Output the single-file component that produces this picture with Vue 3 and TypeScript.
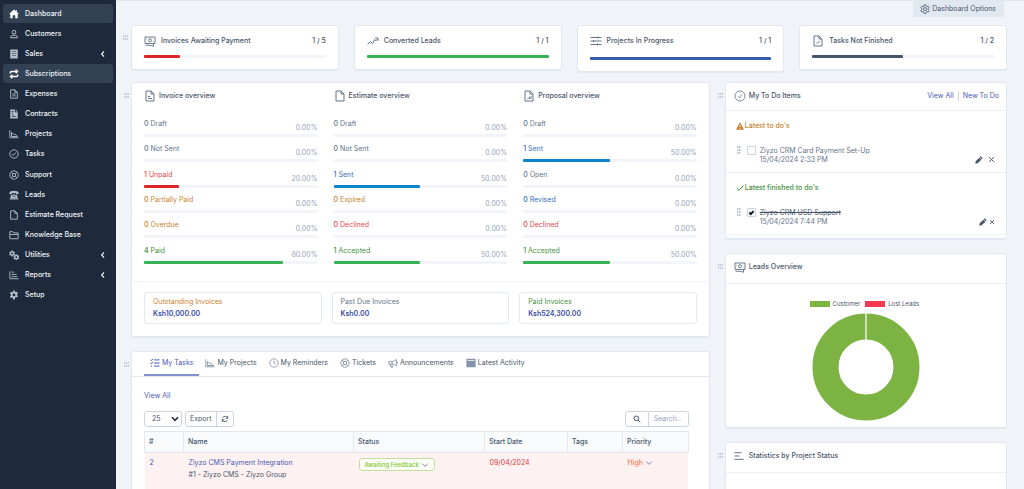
<script setup lang="ts">
import { h, ref, type FunctionalComponent } from 'vue'

interface Glyph {
  line?: string
  fill?: string
  weight?: number
}

const glyphs: Record<string, Glyph> = {
  home: { fill: 'M12 1 0 12h3v10h6v-7h6v7h6V12h3L19 7.400V3h-3v1.700Z' },
  user: { line: 'M12 3a4.500 4.500 0 1 0 0 9 4.500 4.500 0 0 0 0-9ZM4 21v-2c0-2.500 2-4 4.500-4h7c2.500 0 4.500 1.500 4.500 4v2Z', weight: 2.4 },
  receipt: { fill: 'M3 1h18v22H3ZM7 5.500v1.300h10V5.500ZM7 10v1.300h10V10ZM7 14.500v1.300h10v-1.300Z' },
  repeat: { line: 'M3 11V9c0-2 1-3 3-3h14M16 2l4.500 4L16 10M21 13v2c0 2-1 3-3 3H4M8 14l-4.500 4L8 22', weight: 3.4 },
  fileLines: { line: 'M4 2h10l6 6v14H4ZM14 2v6h6M8 12h8M8 16.500h8', weight: 2.2 },
  contract: { fill: 'M3 1h11v7h7v15H3ZM16 1l5 5h-5ZM6 5v1.500h5V5ZM6 9v1.500h4V9ZM7 18l2-5 2 4h5v1.500h-6l-1-2-1 2Z' },
  chart: { line: 'M2 3v18h21M6 8l5 5 3-1 6 6H6Z', weight: 2.2 },
  check: { line: 'M12 2a10 10 0 1 0 0 20 10 10 0 0 0 0-20ZM7.500 12.500l3 3 6-7', weight: 2.2 },
  checkThin: { line: 'M12 2a10 10 0 1 0 0 20 10 10 0 0 0 0-20ZM8 12.500l3 3 5-6.500', weight: 1.7 },
  ring: { line: 'M12 2a10 10 0 1 0 0 20 10 10 0 0 0 0-20ZM12 8a4 4 0 1 0 0 8 4 4 0 0 0 0-8ZM5 5l4 4M19 5l-4 4M5 19l4-4M19 19l-4-4', weight: 2.2 },
  phone: { fill: 'M1 7c0-3 6-5 11-5s11 2 11 5v3h-6V7H7v3H1ZM5 12h14l2 7H3ZM2 20h20v3H2ZM9 9h6v1.500H9ZM8 14v1.500h8V14Z' },
  file: { line: 'M4 2h10l6 6v14H4ZM14 2v6h6', weight: 2.2 },
  folder: { line: 'M2 4h7l3 3h10v14H2ZM2 11h20', weight: 2.2 },
  cog: { fill: 'M10 1h4l.6 3 2.200 1.200L19.700 4l2 3.500-2.300 2v2.900l2.300 2-2 3.600-2.900-1-2.200 1.200L14 23h-4l-.6-3.800L7.200 18l-2.900 1-2-3.600 2.300-2v-2.900l-2.300-2L4.300 4l2.900 1.200L9.400 4ZM12 8.300a3.400 3.400 0 1 0 0 6.800 3.400 3.400 0 0 0 0-6.800Z' },
  cogs: { fill: 'M6 1h3l.4 2 1.600 1 2-.6 1.400 2.500-1.400 1.500v1.800l1.400 1.400-1.400 2.500-2-.6-1.600.9L9 15.500H6l-.5-2.100-1.500-.9-2 .6-1.500-2.500L2 9.200V7.400L.5 5.900 2 3.400l2 .6 1.500-1ZM7.500 6a2.200 2.200 0 1 0 0 4.500 2.200 2.200 0 0 0 0-4.500ZM16 10h3l.4 2 1.600 1 2-.6 1.400 2.500-1.400 1.500v1.800l1.400 1.400-1.400 2.500-2-.6-1.600.9-.4 2h-3l-.5-2-1.500-.9-2 .6-1.500-2.500 1.500-1.400v-1.800L10.500 15l1.500-2.600 2 .6 1.500-1ZM17.500 15a2.200 2.200 0 1 0 0 4.500 2.200 2.200 0 0 0 0-4.500Z' },
  bars: { line: 'M2 3v18h21M6 5h6M6 10.500h12M6 16h14', weight: 2.2 },
  chevLeft: { line: 'M15 4 8 12l7 8', weight: 3.6 },
  chevDown: { line: 'M4 8l8 8 8-8', weight: 2.6 },
  chevBold: { line: 'M3 7l9 9 9-9', weight: 4.5 },
  money: { line: 'M2 4h20v13H2ZM12 7.500a3 3 0 1 0 0 6 3 3 0 0 0 0-6ZM5 7.500v1M19 12.500v1M3 20.500c7-.5 12 .5 16 2v-5', weight: 1.9 },
  trend: { line: 'M1 19l6-6 4 4 4-8 2 3 5-5M16 6h6v6', weight: 1.9 },
  sliders: { line: 'M1 5h22M1 12h22M1 19h22M16 3v4M7 10v4M15 17v4', weight: 2 },
  docCheck: { line: 'M4 2h10l6 6v14H4ZM14 2v6h6M9 15l2 2 4-5', weight: 2 },
  docText: { line: 'M4 2h10l6 6v14H4ZM14 2v6h6M8 13h4M8 17h8', weight: 2 },
  docPlain: { line: 'M4 2h10l6 6v14H4ZM14 2v6h6', weight: 2 },
  docChart: { line: 'M4 2h10l6 6v14H4ZM14 2v6h6M10 18v-2M13 18v-4M16 18v-6', weight: 2 },
  gearLine: { line: 'M10 2h4l.7 3 2.300 1.300 3-.9 2 3.400-2.200 2.200v2.500l2.200 2.200-2 3.400-3-.9-2.300 1.300L14 22.500h-4L9.300 19.500 7 18.200l-3 .9-2-3.400 2.200-2.200V11L2 8.800l2-3.400 3 .9L9.300 5ZM12 8.500a3.700 3.700 0 1 0 0 7.400 3.700 3.700 0 0 0 0-7.400Z', weight: 2 },
  tasks: { line: 'M1 4.500l2 2L7 2M1 12l2 2 4-4.500M10 4.500h13M10 12h13M10 19.500h13M2 19.500h3', weight: 2.4 },
  clock: { line: 'M12 2a10 10 0 1 0 0 20 10 10 0 0 0 0-20ZM12 6v6.500l4 2.500', weight: 2 },
  horn: { line: 'M2 8.500h7c5 0 8-2 11-5v16c-3-3-6-5-11-5H2ZM5 15l2 7h4l-2-7M23 9.500v4M10 8.500v6', weight: 2.2 },
  window: { fill: 'M1 2h22v20H1ZM4 5v1.800h16V5Z' },
  refresh: { line: 'M20 10C19 6 16 4 12 4 8.500 4 6 6 4 9M4 14c1 4 4 6 8 6 3.500 0 6-2 8-5M20 3v7h-6M4 21v-7h6', weight: 2.6 },
  search: { line: 'M10 3a7 7 0 1 0 0 14 7 7 0 0 0 0-14ZM15 15l7 7', weight: 3 },
  warn: { fill: 'M12 1 0 23h24ZM10.700 8h2.600v8h-2.600ZM10.700 18h2.600v2.600h-2.600Z' },
  tick: { line: 'M2 12l7 7L22 5', weight: 3 },
  pencil: { fill: 'M17 1l6 6-3 3-6-6ZM13 5l6 6L8 22l-7 1 1-7Z' },
  cross: { line: 'M4 4l16 16M20 4 4 20', weight: 3.4 },
  lines: { line: 'M1 4h17M1 12h12M1 20h22', weight: 2.4 },
}

const Icon: FunctionalComponent<{ name: string }> = (props) => {
  const g = glyphs[props.name]
  return h('svg', { viewBox: '0 0 24 24', 'aria-hidden': 'true' }, [
    g.line
      ? h('path', { d: g.line, fill: 'none', stroke: 'currentColor', 'stroke-width': g.weight })
      : h('path', { d: g.fill, fill: 'currentColor', 'fill-rule': 'evenodd' }),
  ])
}
Icon.props = ['name']

const menu = [
  { label: 'Dashboard', icon: 'home', active: true },
  { label: 'Customers', icon: 'user' },
  { label: 'Sales', icon: 'receipt', sub: true },
  { label: 'Subscriptions', icon: 'repeat', active: true },
  { label: 'Expenses', icon: 'fileLines' },
  { label: 'Contracts', icon: 'contract' },
  { label: 'Projects', icon: 'chart' },
  { label: 'Tasks', icon: 'check' },
  { label: 'Support', icon: 'ring' },
  { label: 'Leads', icon: 'phone' },
  { label: 'Estimate Request', icon: 'file' },
  { label: 'Knowledge Base', icon: 'folder' },
  { label: 'Utilities', icon: 'cogs', sub: true },
  { label: 'Reports', icon: 'bars', sub: true },
  { label: 'Setup', icon: 'cog' },
]

const stats = [
  { label: 'Invoices Awaiting Payment', icon: 'money', value: '1 / 5', pct: 20, tone: 'red' },
  { label: 'Converted Leads', icon: 'trend', value: '1 / 1', pct: 100, tone: 'green' },
  { label: 'Projects In Progress', icon: 'sliders', value: '1 / 1', pct: 100, tone: 'indigo' },
  { label: 'Tasks Not Finished', icon: 'docCheck', value: '1 / 2', pct: 50, tone: 'slate' },
]

interface Row { n: number; label: string; pct: number; tone: string }
const row = (n: number, label: string, pct: number, tone: string): Row => ({ n, label, pct, tone })

const overviews = [
  {
    title: 'Invoice overview', icon: 'docText',
    rows: [
      row(0, 'Draft', 0, 'grey'), row(0, 'Not Sent', 0, 'grey'), row(1, 'Unpaid', 20, 'red'),
      row(0, 'Partially Paid', 0, 'amber'), row(0, 'Overdue', 0, 'amber'), row(4, 'Paid', 80, 'green'),
    ],
  },
  {
    title: 'Estimate overview', icon: 'docPlain',
    rows: [
      row(0, 'Draft', 0, 'grey'), row(0, 'Not Sent', 0, 'grey'), row(1, 'Sent', 50, 'blue'),
      row(0, 'Expired', 0, 'amber'), row(0, 'Declined', 0, 'red'), row(1, 'Accepted', 50, 'green'),
    ],
  },
  {
    title: 'Proposal overview', icon: 'docChart',
    rows: [
      row(0, 'Draft', 0, 'grey'), row(1, 'Sent', 50, 'blue'), row(0, 'Open', 0, 'grey'),
      row(0, 'Revised', 0, 'blue'), row(0, 'Declined', 0, 'red'), row(1, 'Accepted', 50, 'green'),
    ],
  },
]

const totals = [
  { label: 'Outstanding Invoices', value: 'Ksh10,000.00', tone: 'amber' },
  { label: 'Past Due Invoices', value: 'Ksh0.00', tone: 'grey' },
  { label: 'Paid Invoices', value: 'Ksh524,300.00', tone: 'green' },
]

const tabs = [
  { label: 'My Tasks', icon: 'tasks' },
  { label: 'My Projects', icon: 'chart' },
  { label: 'My Reminders', icon: 'clock' },
  { label: 'Tickets', icon: 'ring' },
  { label: 'Announcements', icon: 'horn' },
  { label: 'Latest Activity', icon: 'window' },
]
const currentTab = ref('My Tasks')

const todos = ref([
  { id: 'open', heading: "Latest to do's", icon: 'warn', tone: 'amber', text: 'Ziyzo CRM Card Payment Set-Up', date: '15/04/2024 2:33 PM', done: false },
  { id: 'finished', heading: "Latest finished to do's", icon: 'tick', tone: 'green', text: 'Ziyzo CRM USD Support', date: '15/04/2024 7:44 PM', done: true },
])
const pageSize = ref('25')
const query = ref('')
</script>

<template>
  <div class="shell">
    <nav class="sidebar" aria-label="Main menu">
      <ul class="menu">
        <li v-for="m in menu" :key="m.label">
          <a href="#" class="menu-link" :class="{ active: m.active }">
            <Icon :name="m.icon" class="menu-icon" />
            <span>{{ m.label }}</span>
            <Icon v-if="m.sub" name="chevLeft" class="menu-arrow" />
          </a>
        </li>
      </ul>
    </nav>

    <main class="content">
      <div class="topline">
        <button type="button" class="options"><Icon name="gearLine" class="i10" />Dashboard Options</button>
      </div>

      <section class="stats">
        <span class="grip"></span>
        <article v-for="s in stats" :key="s.label" class="card stat" :class="'stat-' + s.tone">
          <div class="stat-head">
            <Icon :name="s.icon" class="i12" />
            <span class="stat-label">{{ s.label }}</span>
            <span class="stat-value">{{ s.value }}</span>
          </div>
          <div class="track"><div class="bar" :class="'bg-' + s.tone" :style="{ width: s.pct + '%' }"></div></div>
        </article>
      </section>

      <div class="columns">
        <div class="column">
          <section class="card overview">
            <span class="grip"></span>
            <div class="overview-grid">
              <div v-for="o in overviews" :key="o.title">
                <h2 class="title"><Icon :name="o.icon" class="i12" />{{ o.title }}</h2>
                <div class="rows">
                  <div v-for="r in o.rows" :key="r.label" class="row">
                    <div class="row-text">
                      <a href="#" :class="'fg-' + r.tone"><b>{{ r.n }}</b> {{ r.label }}</a>
                      <span class="pct">{{ r.pct.toFixed(2) }}%</span>
                    </div>
                    <div class="track"><div class="bar" :class="'bg-' + r.tone" :style="{ width: r.pct + '%' }"></div></div>
                  </div>
                </div>
              </div>
            </div>
            <div class="totals">
              <div v-for="t in totals" :key="t.label" class="total">
                <div :class="'fg-' + t.tone">{{ t.label }}</div>
                <div class="amount">{{ t.value }}</div>
              </div>
            </div>
          </section>

          <section class="card tasks">
            <span class="grip"></span>
            <div class="tabs" role="tablist">
              <button v-for="t in tabs" :key="t.label" type="button" role="tab" class="tab"
                :class="{ current: t.label === currentTab }" :aria-selected="t.label === currentTab"
                @click="currentTab = t.label">
                <Icon :name="t.icon" class="i10" />{{ t.label }}
              </button>
            </div>
            <div class="tasks-body">
              <a href="#" class="link">View All</a>
              <div class="toolbar">
                <span class="select-wrap">
                  <select v-model="pageSize" aria-label="Rows per page">
                    <option>10</option><option>25</option><option>50</option>
                  </select>
                  <Icon name="chevBold" class="select-arrow" />
                </span>
                <span class="group">
                  <button type="button">Export</button>
                  <button type="button" aria-label="Reload"><Icon name="refresh" class="i8" /></button>
                </span>
                <label class="group search">
                  <span class="search-icon"><Icon name="search" class="i8" /></span>
                  <input v-model="query" type="text" placeholder="Search.." aria-label="Search tasks" />
                </label>
              </div>
              <table>
                <colgroup>
                  <col class="c-id" /><col class="c-name" /><col class="c-status" />
                  <col class="c-date" /><col class="c-tags" /><col />
                </colgroup>
                <thead>
                  <tr><th>#</th><th>Name</th><th>Status</th><th>Start Date</th><th>Tags</th><th>Priority</th></tr>
                </thead>
                <tbody>
                  <tr>
                    <td><a href="#" class="link">2</a></td>
                    <td>
                      <a href="#" class="link">Ziyzo CMS Payment Integration</a>
                      <div class="project">#1 - Ziyzo CMS - Ziyzo Group</div>
                    </td>
                    <td><button type="button" class="status">Awaiting Feedback<Icon name="chevDown" class="i8" /></button></td>
                    <td class="due">09/04/2024</td>
                    <td></td>
                    <td><button type="button" class="priority">High<Icon name="chevDown" class="i8" /></button></td>
                  </tr>
                </tbody>
              </table>
            </div>
          </section>
        </div>

        <div class="column">
          <section class="card todo">
            <span class="grip"></span>
            <header class="panel-head todo-head">
              <h2 class="title"><Icon name="checkThin" class="i12" />My To Do Items</h2>
              <span class="head-links"><a href="#" class="link">View All</a><a href="#" class="link">New To Do</a></span>
            </header>
            <div v-for="t in todos" :key="t.id" class="todo-group" :class="t.id">
              <h3 class="todo-title" :class="'fg-' + t.tone"><Icon :name="t.icon" class="i8" />{{ t.heading }}</h3>
              <div class="todo-item">
                <span class="dots"></span>
                <input :id="'todo-' + t.id" v-model="t.done" type="checkbox" />
                <div class="todo-text">
                  <label :for="'todo-' + t.id" :class="{ struck: t.done }">{{ t.text }}</label>
                  <div>{{ t.date }}</div>
                </div>
                <span class="todo-actions">
                  <button type="button" aria-label="Edit"><Icon name="pencil" class="i8" /></button>
                  <button type="button" aria-label="Delete"><Icon name="cross" class="cross" /></button>
                </span>
              </div>
            </div>
          </section>

          <section class="card leads">
            <span class="grip"></span>
            <header class="panel-head"><h2 class="title"><Icon name="money" class="i12" />Leads Overview</h2></header>
            <div class="legend">
              <span><i class="swatch bg-lime"></i>Customer</span>
              <span><i class="swatch bg-rose"></i>Lost Leads</span>
            </div>
            <svg class="donut" viewBox="0 0 108 108" role="img" aria-label="Leads by status">
              <circle cx="54" cy="54" r="40.500" fill="none" stroke="#7cb342" stroke-width="26" />
              <path d="M54 0v28" stroke="#fff" stroke-width="1.200" />
            </svg>
          </section>

          <section class="card statistics">
            <span class="grip"></span>
            <header class="panel-head"><h2 class="title"><Icon name="lines" class="i10" />Statistics by Project Status</h2></header>
          </section>
        </div>
      </div>
    </main>
  </div>
</template>

<style>
body { margin: 0; }
</style>

<style scoped>
.shell {
  display: flex;
  height: 100vh;
  overflow: hidden;
  background: #f0f4f9;
  color: #475569;
  font: 400 7px/10px Inter, "Liberation Sans", sans-serif;
}
.shell *, .shell *::before { box-sizing: border-box; }
a { color: inherit; text-decoration: none; }
button, input, select { font: inherit; color: inherit; margin: 0; padding: 0; border: 0; background: none; }
svg { display: block; flex: none; }
h2, h3 { margin: 0; font: inherit; }
.i8 { width: 8px; height: 8px; }
.i10 { width: 10px; height: 10px; }
.i12 { width: 12px; height: 12px; }

.sidebar { flex: none; width: 116px; padding: 4px 3px 0; background: #1e293b; color: #f1f5f9; }
.menu { display: grid; grid-auto-rows: 1fr; height: 302px; margin: 0; padding: 0; list-style: none; }
.menu-link { display: flex; align-items: center; height: 19px; padding: 0 6px; border-radius: 3px; font-weight: 500; }
.menu-link.active { background: #334155; }
.menu-icon { width: 10px; height: 10px; margin-right: 6px; color: #b4becb; }
.active .menu-icon { color: #fff; }
.menu-arrow { width: 8px; height: 8px; margin-left: auto; }

.content { flex: 1; min-width: 0; padding: 0 17px 0 15px; border-top: 1px solid #dfe6ee; }
.topline { display: flex; justify-content: flex-end; height: 24px; padding-right: 3px; }
.options { display: flex; align-items: center; gap: 2px; height: 16px; padding: 0 8px 0 7px; background: #e2e8f0; }

.card { position: relative; min-width: 0; background: #fff; border: 1px solid #e2e8f0; border-radius: 3px; box-shadow: 0 1px 1px #e2e8f0; }
.grip {
  position: absolute; left: -8px; top: 9px; width: 5px; height: 7px;
  background: repeating-linear-gradient(#f0f4f9 0 1px, transparent 1px 3px), repeating-linear-gradient(90deg, #c3ccd8 0 1px, #e0e6ee 1px 2px);
}
.stats { position: relative; display: grid; grid-template-columns: repeat(4, minmax(0, 1fr)); gap: 15px; align-items: start; margin-bottom: 10px; }
.stat { padding: 8px 12px 11px; }
.stat-head { display: flex; align-items: center; height: 14px; margin-bottom: 7px; font-weight: 500; }
.stat-head svg { margin-right: 5px; color: #64748b; }
.stat-value { margin-left: auto; }
.stat-indigo .stat-head { margin-bottom: 9px; }
.track { height: 3px; border-radius: 1px; background: #f1f5f9; }
.bar { height: 3px; border-radius: 1px; }

.columns { display: grid; grid-template-columns: minmax(0, 41fr) minmax(0, 20fr); gap: 15px; }
.column { display: flex; flex-direction: column; gap: 14px; min-width: 0; }
.title { display: flex; align-items: center; gap: 3px; font-weight: 500; }
.title svg { color: #64748b; }

.overview-grid { display: grid; grid-template-columns: repeat(3, minmax(0, 1fr)); gap: 16px; padding: 7px 12px 10px; }
.rows { display: grid; grid-auto-rows: 1fr; height: 152px; margin-top: 17px; }
.row-text { display: flex; justify-content: space-between; height: 15px; }
.row-text b { font-weight: 500; }
.pct { padding-top: 4px; color: #94a3b8; }
.totals { display: grid; grid-template-columns: repeat(3, minmax(0, 1fr)); gap: 10px; padding: 10px 12px 12px; border-top: 1px solid #eef2f6; }
.total { padding: 3px 8px; border: 1px solid #e2e8f0; border-radius: 3px; line-height: 12px; }
.amount { color: #3949a8; font-weight: 600; }

.tabs { display: flex; height: 25px; padding: 0 12px; border-bottom: 1px solid #e2e8f0; }
.tab { display: flex; align-items: center; gap: 2px; padding: 0 6px; border-bottom: 2px solid transparent; }
.tab svg { color: #8593a8; }
.tab.current, .tab.current svg { color: #4a5ab5; }
.tab.current { border-color: #8492cf; }
.tasks-body { padding: 14px 20px 0 12px; }
.link { color: #4a5ab5; }
.toolbar { display: flex; gap: 3px; height: 16px; margin: 10px 0 4px; }
.select-wrap { position: relative; width: 38px; }
select { width: 100%; height: 16px; padding-left: 7px; border: 1px solid #cbd5e1; border-radius: 3px; appearance: none; }
.select-arrow { position: absolute; right: 3px; top: 4px; width: 8px; height: 8px; pointer-events: none; color: #1e293b; }
.group { display: flex; border: 1px solid #cbd5e1; border-radius: 3px; overflow: hidden; }
.group button { padding: 0 4px; }
.group button + button, .group input { border-left: 1px solid #cbd5e1; }
.search { width: 64px; margin-left: auto; }
.search-icon { display: grid; place-items: center; width: 22px; }
.search input { flex: 1; min-width: 0; padding: 0 5px; outline: none; }
.search input::placeholder { color: #94a3b8; opacity: 1; }

table { width: 100%; table-layout: fixed; border-collapse: collapse; }
.c-id { width: 39px; }
.c-name { width: 170px; }
.c-status { width: 131px; }
.c-date { width: 83px; }
.c-tags { width: 55px; }
th { height: 21px; padding: 0 4px; border: 1px solid #e2e8f0; background: #f8fafc; font-weight: 500; text-align: left; }
td { height: 48px; padding: 5px; background: #fef1f1; vertical-align: top; }
.project { margin-top: 2px; }
.status { display: flex; align-items: center; gap: 2px; height: 13px; padding: 0 5px; border: 1px solid #c3e09b; border-radius: 3px; background: #fbfdf7; color: #84c529; font-size: 6px; font-weight: 500; }
.status svg, .priority svg { color: #64748b; }
.due { color: #dc3a3a; }
.priority { display: flex; align-items: center; gap: 2px; color: #fc6b2d; }

.panel-head { display: flex; align-items: center; justify-content: space-between; height: 30px; padding: 0 7px 3px 8px; border-bottom: 1px solid #eceff4; }
.todo-head { height: 28px; padding-bottom: 1px; }
.head-links { display: flex; }
.head-links a + a { margin-left: 4px; padding-left: 4px; border-left: 1px solid #cbd5e1; }
.todo { padding-bottom: 3px; }
.todo-group { height: 62px; padding: 10px 11px 0 10px; border-bottom: 1px solid #eef2f6; }
.todo-title { display: flex; align-items: center; gap: 1px; font-weight: 500; }
.todo-item { display: flex; align-items: flex-start; margin-top: 15px; line-height: 9px; }
.dots {
  width: 4px; height: 9px; margin: 0 6px 0 1px;
  background: repeating-linear-gradient(transparent 0 2px, #fff 2px 3px), repeating-linear-gradient(90deg, #b9c2cf 0 1px, #e0e5ec 1px 2px);
}
.todo-item input { display: grid; place-items: center; width: 9px; height: 9px; margin-right: 4px; border: 1px solid #cbd5e1; border-radius: 1px; appearance: none; }
.todo-item input:checked::before { content: ""; width: 5px; height: 3px; border: solid #0f172a; border-width: 0 0 2px 2px; transform: rotate(-45deg); }
.todo-text { color: #64748b; }
.struck { text-decoration: line-through; color: #475569; }
.todo-actions { display: flex; align-items: center; gap: 5px; height: 9px; margin: 9px 0 0 auto; }
.cross { width: 7px; height: 7px; }
.finished .todo-actions { gap: 2px; }
.finished .cross { width: 6px; height: 6px; }

.leads { padding-bottom: 6px; }
.legend { display: flex; justify-content: center; gap: 5px; margin-top: 15px; padding-right: 3px; font-size: 6px; }
.legend span { display: flex; align-items: center; gap: 3px; }
.swatch { width: 20px; height: 6px; }
.donut { width: 108px; height: 108px; margin: 4px auto 0; }
.statistics { height: 120px; }
.statistics .title { gap: 5px; }

.fg-grey { color: #64748b; }
.fg-red { color: #e5484d; }
.fg-amber { color: #c97f2c; }
.fg-green { color: #3f9142; }
.fg-blue { color: #2f6fbe; }
.bg-red { background: #dc2626; }
.bg-green { background: #38b256; }
.bg-blue { background: #0d83cb; }
.bg-indigo { background: #375bad; }
.bg-slate { background: #475569; }
.bg-lime { background: #7cb342; }
.bg-rose { background: #ef3a4f; }
</style>
